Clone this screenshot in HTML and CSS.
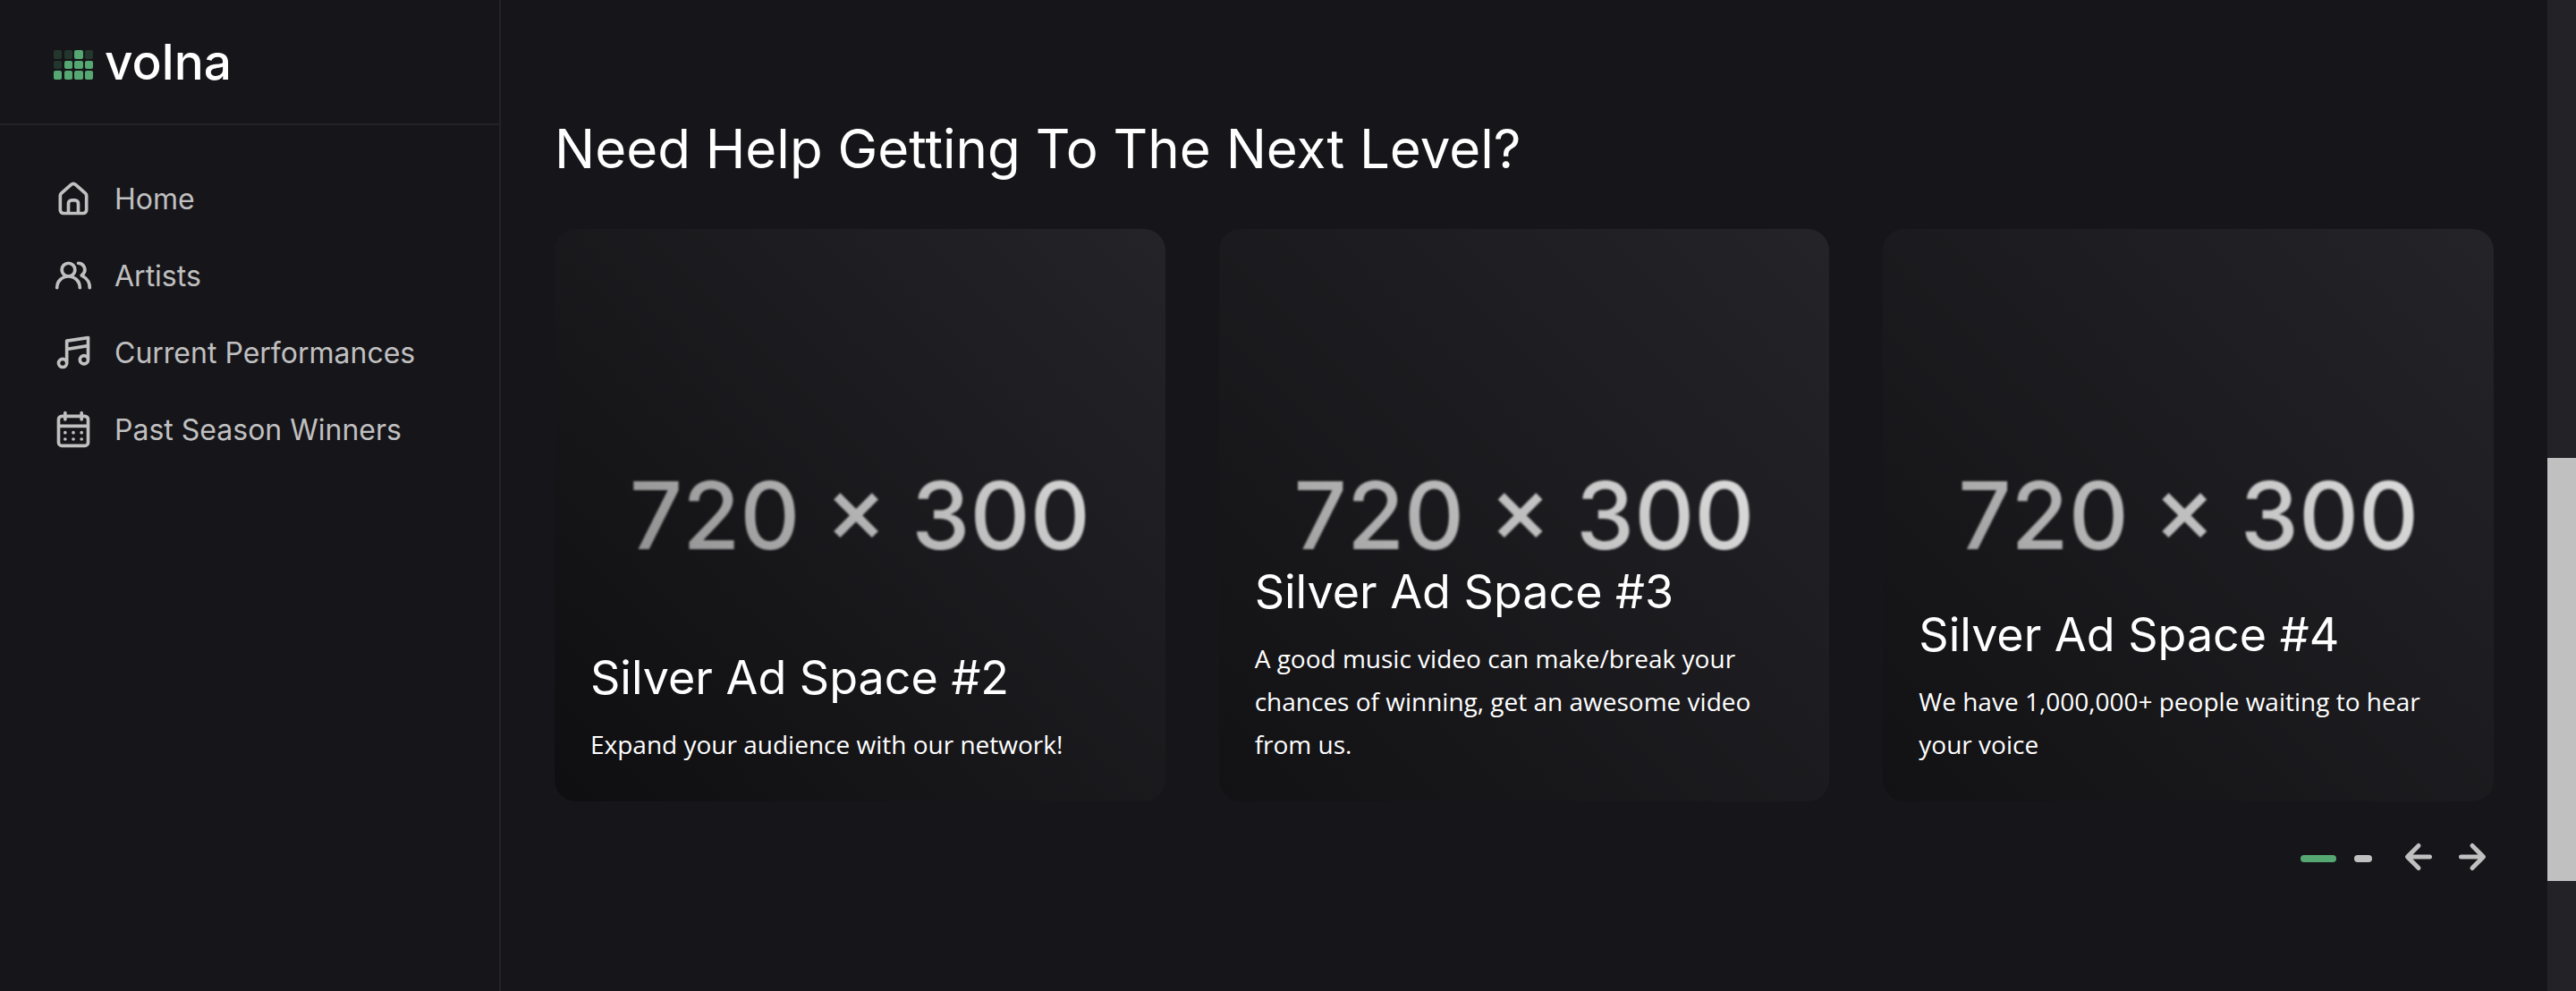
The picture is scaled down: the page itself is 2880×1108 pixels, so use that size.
FILE: index.html
```html
<!DOCTYPE html>
<html lang="en">
<head>
<meta charset="utf-8">
<meta name="viewport" content="width=device-width, initial-scale=1">
<title>Volna</title>
<link rel="stylesheet" href="styles.css">
</head>
<body>
<div class="page">
  <aside class="sidebar">
    <header class="sidebar-head">
      <a class="logo" href="#">
        <svg class="logo-mark" viewBox="0 0 44 33" aria-hidden="true">
          <g class="cell-off">
            <rect x="0" y="0" width="9" height="10" rx="2"/>
            <rect x="12" y="0" width="9" height="10" rx="2"/>
            <rect x="35" y="0" width="9" height="10" rx="2"/>
            <rect x="0" y="12" width="9" height="9" rx="2"/>
          </g>
          <g class="cell-on">
            <rect x="23" y="0" width="10" height="10" rx="2"/>
            <rect x="12" y="12" width="9" height="9" rx="2"/>
            <rect x="23" y="12" width="10" height="9" rx="2"/>
            <rect x="35" y="12" width="9" height="9" rx="2"/>
            <rect x="0" y="23" width="9" height="10" rx="2"/>
            <rect x="12" y="23" width="9" height="10" rx="2"/>
            <rect x="23" y="23" width="10" height="10" rx="2"/>
            <rect x="35" y="23" width="9" height="10" rx="2"/>
          </g>
        </svg>
        <span class="logo-name">volna</span>
      </a>
    </header>
    <nav class="menu">
      <a class="menu-link" href="#">
        <svg class="menu-icon" viewBox="0 0 24 24" aria-hidden="true"><path d="M20,8h0L14,2.74a3,3,0,0,0-4,0L4,8a3,3,0,0,0-1,2.26V19a3,3,0,0,0,3,3H18a3,3,0,0,0,3-3V10.25A3,3,0,0,0,20,8ZM14,20H10V15a1,1,0,0,1,1-1h2a1,1,0,0,1,1,1Zm5-1a1,1,0,0,1-1,1H16V15a3,3,0,0,0-3-3H11a3,3,0,0,0-3,3v5H6a1,1,0,0,1-1-1V10.25a1,1,0,0,1,.34-.75l6-5.25a1,1,0,0,1,1.32,0l6,5.25a1,1,0,0,1,.34.75Z"/></svg>
        <span>Home</span>
      </a>
      <a class="menu-link" href="#">
        <svg class="menu-icon" viewBox="0 0 24 24" aria-hidden="true"><path d="M12.3,12.22A4.92,4.92,0,0,0,14,8.5a5,5,0,0,0-10,0,4.92,4.92,0,0,0,1.7,3.72A8,8,0,0,0,1,19.5a1,1,0,0,0,2,0,6,6,0,0,1,12,0,1,1,0,0,0,2,0A8,8,0,0,0,12.3,12.22ZM9,11.5a3,3,0,1,1,3-3A3,3,0,0,1,9,11.5Zm9.74.32A5,5,0,0,0,15,3.5a1,1,0,0,0,0,2,3,3,0,0,1,3,3,3,3,0,0,1-1.5,2.59,1,1,0,0,0-.5.84,1,1,0,0,0,.45.86l.39.26.13.07a7,7,0,0,1,4,6.38,1,1,0,0,0,2,0A9,9,0,0,0,18.74,11.82Z"/></svg>
        <span>Artists</span>
      </a>
      <a class="menu-link" href="#">
        <svg class="menu-icon" viewBox="0 0 24 24" aria-hidden="true"><path d="M21.65,2.24a1,1,0,0,0-.8-.23l-13,2A1,1,0,0,0,7,5V15.35A3.45,3.45,0,0,0,5.5,15,3.5,3.5,0,1,0,9,18.5V10.86L20,9.17v4.18A3.45,3.45,0,0,0,18.5,13,3.5,3.5,0,1,0,22,16.5V3A1,1,0,0,0,21.65,2.24ZM5.5,20A1.5,1.5,0,1,1,7,18.5,1.5,1.5,0,0,1,5.5,20Zm13-2A1.5,1.5,0,1,1,20,16.5,1.5,1.5,0,0,1,18.5,18ZM20,7.14,9,8.83v-3L20,4.17Z"/></svg>
        <span>Current Performances</span>
      </a>
      <a class="menu-link" href="#">
        <svg class="menu-icon" viewBox="0 0 24 24" aria-hidden="true"><path d="M12,19a1,1,0,1,0-1-1A1,1,0,0,0,12,19Zm5,0a1,1,0,1,0-1-1A1,1,0,0,0,17,19Zm0-4a1,1,0,1,0-1-1A1,1,0,0,0,17,15Zm-5,0a1,1,0,1,0-1-1A1,1,0,0,0,12,15ZM19,3H18V2a1,1,0,0,0-2,0V3H8V2A1,1,0,0,0,6,2V3H5A3,3,0,0,0,2,6V20a3,3,0,0,0,3,3H19a3,3,0,0,0,3-3V6A3,3,0,0,0,19,3Zm1,17a1,1,0,0,1-1,1H5a1,1,0,0,1-1-1V11H20ZM20,9H4V6A1,1,0,0,1,5,5H6V6A1,1,0,0,0,8,6V5h8V6a1,1,0,0,0,2,0V5h1a1,1,0,0,1,1,1ZM7,15a1,1,0,1,0-1-1A1,1,0,0,0,7,15Zm0,4a1,1,0,1,0-1-1A1,1,0,0,0,7,19Z"/></svg>
        <span>Past Season Winners</span>
      </a>
    </nav>
  </aside>

  <main class="content">
    <h2 class="section-title">Need Help Getting To The Next Level?</h2>
    <div class="slides">
      <article class="slide slide-deep">
        <div class="slide-image">720 × 300</div>
        <h3 class="slide-title">Silver Ad Space #2</h3>
        <p class="slide-text">Expand your audience with our network!</p>
      </article>
      <article class="slide">
        <div class="slide-image">720 × 300</div>
        <h3 class="slide-title">Silver Ad Space #3</h3>
        <p class="slide-text">A good music video can make/break your chances of winning, get an awesome video from us.</p>
      </article>
      <article class="slide">
        <div class="slide-image">720 × 300</div>
        <h3 class="slide-title">Silver Ad Space #4</h3>
        <p class="slide-text">We have 1,000,000+ people waiting to hear your voice</p>
      </article>
    </div>
    <div class="pager">
      <div class="dots">
        <button class="dot dot-active" type="button" aria-label="Page 1"></button>
        <button class="dot" type="button" aria-label="Page 2"></button>
      </div>
      <div class="arrows">
        <button class="arrow" type="button" aria-label="Previous"><svg viewBox="0 0 48 48" aria-hidden="true"><path d="M36.500 24H12M24 11.500L11.500 24L24 36.500"/></svg></button>
        <button class="arrow" type="button" aria-label="Next"><svg viewBox="0 0 48 48" aria-hidden="true"><path d="M11.500 24H36M24 11.500L36.500 24L24 36.500"/></svg></button>
      </div>
    </div>
  </main>

  <div class="scroll-track" aria-hidden="true">
    <div class="scroll-before" style="height: 46.2%"></div>
    <div class="scroll-thumb" style="height: 42.7%"></div>
  </div>
</div>
</body>
</html>
```

FILE: styles.css
```css
* {
  box-sizing: border-box;
}

body {
  margin: 0;
  background: #16151a;
  color: #fff;
  font-family: Inter, "Liberation Sans", sans-serif;
}

button {
  padding: 0;
  border: 0;
  background: none;
  cursor: pointer;
}

.page {
  display: grid;
  grid-template-columns: 560px minmax(0, 1fr) 32px;
  min-height: 100vh;
}

/* Sidebar */
.sidebar {
  border-right: 2px solid #222227;
}

.sidebar-head {
  display: flex;
  align-items: center;
  height: 140px;
  padding: 0 60px;
  border-bottom: 2px solid #222227;
}

.logo {
  display: flex;
  align-items: center;
  gap: 13px;
  color: #fff;
  text-decoration: none;
}

.logo-mark {
  width: 44px;
  height: 33px;
  margin-top: 7px;
}

.cell-on {
  fill: #55a872;
}

.cell-off {
  fill: #23372e;
}

.logo-name {
  font-size: 55px;
  font-weight: 500;
  line-height: 68px;
}

.menu {
  display: flex;
  flex-direction: column;
  gap: 40px;
  padding: 60px;
}

.menu-link {
  display: flex;
  align-items: flex-start;
  gap: 24px;
  color: #c0c0c0;
  font-size: 32px;
  line-height: 46px;
  text-decoration: none;
}

.menu-icon {
  width: 44px;
  height: 44px;
  fill: #c0c0c0;
}

/* Slider */
.content {
  padding: 130px 60px 60px;
}

.section-title {
  margin: 0 0 54px;
  font-size: 60px;
  font-weight: 400;
  line-height: 72px;
}

.slides {
  display: grid;
  grid-template-columns: repeat(3, minmax(0, 1fr));
  gap: 60px;
}

.slide {
  position: relative;
  isolation: isolate;
  display: flex;
  flex-direction: column;
  justify-content: flex-end;
  min-height: 640px;
  padding: 40px;
  border-radius: 24px;
  background: #242328;
  overflow: hidden;
}

/* Shade over the picture, under the caption */
.slide::before {
  content: "";
  position: absolute;
  inset: 0;
  z-index: -1;
  background: linear-gradient(45deg, rgba(0, 0, 0, 0.5), rgba(0, 0, 0, 0));
}

.slide-deep::before {
  background: linear-gradient(45deg, rgba(0, 0, 0, 0.6), rgba(0, 0, 0, 0));
}

.slide-image {
  position: absolute;
  inset: 0;
  z-index: -2;
  display: flex;
  align-items: center;
  justify-content: center;
  font-size: 104px;
  font-weight: 500;
  line-height: 102px;
  filter: blur(1px);
}

.slide-title {
  margin: 0 0 20px;
  font-size: 52px;
  font-weight: 400;
  line-height: 60px;
}

.slide-text {
  margin: 0;
  font-family: "Open Sans", "Noto Sans", sans-serif;
  font-size: 28px;
  line-height: 48px;
}

/* Pager */
.pager {
  display: flex;
  align-items: center;
  justify-content: flex-end;
  gap: 28px;
  margin-top: 38px;
}

.dots {
  display: flex;
  gap: 20px;
  padding-top: 4px;
}

.dot {
  width: 20px;
  height: 8px;
  border-radius: 4px;
  background: #c0c0c0;
}

.dot-active {
  width: 40px;
  background: #55a872;
}

.arrows {
  display: flex;
  gap: 12px;
}

.arrow {
  width: 48px;
  height: 48px;
}

.arrow svg {
  display: block;
  fill: none;
  stroke: #c0c0c0;
  stroke-width: 5;
  stroke-linecap: round;
  stroke-linejoin: round;
}

/* Scroll indicator */
.scroll-track {
  background: #222227;
}

.scroll-thumb {
  background: #c0c0c0;
}
```
